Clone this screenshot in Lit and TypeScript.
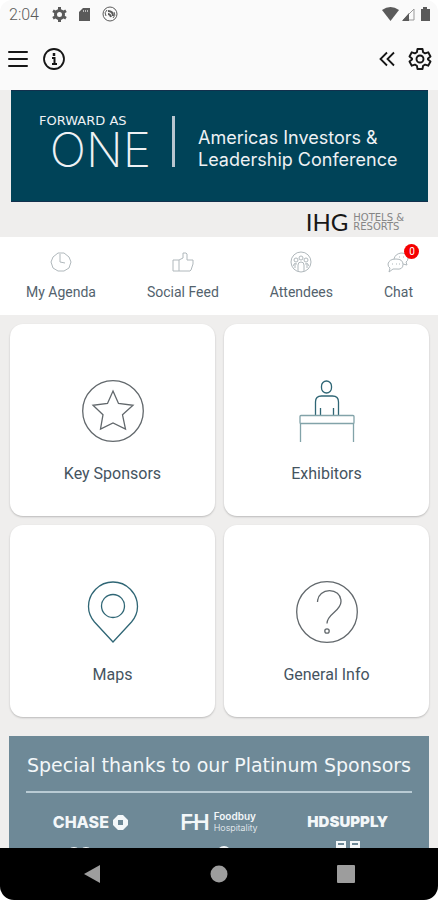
import { LitElement, html, css, svg } from "lit";
import { customElement } from "lit/decorators.js";

const shortcuts = [
  {
    label: "My Agenda",
    badge: "",
    icon: svg`<path d="M8 2h6l5 4 2 5-2 6-5 3H8l-5-3-2-6 2-5z"/><path d="M10 3v8l5 1"/>`,
  },
  {
    label: "Social Feed",
    badge: "",
    icon: svg`<path d="M1 9h6v11H1zM7 9l4-2V2h3l1 1v6h6v4l-2 6-1 1H7"/>`,
  },
  {
    label: "Attendees",
    badge: "",
    icon: svg`<circle cx="11" cy="11" r="10"/><circle cx="11" cy="7" r="2"/><circle cx="6" cy="9" r="2"/><circle cx="16" cy="9" r="2"/><path d="M8 20v-6q0-3 3-3t3 3v6M3 15q1-4 4-2M19 15q-1-4-4-2M5 13v4M17 13v4"/>`,
  },
  {
    label: "Chat",
    badge: "0",
    icon: svg`<path d="M7 8q1-5 7-6 7 0 7 5 0 3-2 4l1 3-4-1"/><path d="M9 8q7 0 7 5.500T9 18H6l-4 3 1-4q-2-1-2-4 1-5 8-5z"/><path d="M5 13h1M9 13h1M12 13h1M12 6h1M16 6h1"/>`,
  },
];

const tiles = [
  {
    label: "Key Sponsors",
    tone: "gray",
    icon: svg`<circle cx="31" cy="31" r="30.300"/><path d="M31 11l5.500 12.500 14.500 1.800-10.500 9.500L43.500 49 31 43l-12.500 6 2.500-14.300-10-9.400 14.500-1.800z"/>`,
  },
  {
    label: "Exhibitors",
    tone: "teal",
    icon: svg`<rect x="25.500" y="1" width="10" height="12" rx="5"/><path d="M19.500 35V22q0-6 6-6h11q6 0 6 6v13M24.500 35v-7M37.500 35v-7"/><g class="soft"><rect x="4" y="35.500" width="54" height="8" rx="1"/><path d="M4.500 43v19M57.500 43v19"/></g>`,
  },
  {
    label: "Maps",
    tone: "teal",
    icon: svg`<circle cx="31" cy="25" r="11.500"/><path d="M31 61L12.500 41Q6.500 34 6.500 25.500a24.500 24.500 0 0 1 49 0Q55.500 34 49.500 41z"/>`,
  },
  {
    label: "General Info",
    tone: "gray",
    icon: svg`<circle cx="31" cy="31" r="30.300"/><path d="M21.500 21C22 6 45 6 45 20.500c0 10-14 12-14 22"/><circle cx="31" cy="50" r="2.200"/>`,
  },
];

@customElement("app-root")
export class AppRoot extends LitElement {
  static styles = css`
    :host {
      display: flex;
      flex-direction: column;
      height: 100vh;
      background: #fff;
      font-family: Roboto, "Liberation Sans", sans-serif;
      color: #45545f;
    }
    * { box-sizing: border-box; }
    svg { display: block; fill: none; stroke: currentColor; }
    button { border: 0; padding: 0; margin: 0; background: none; font: inherit; color: inherit; }
    a { color: inherit; text-decoration: none; }
    .solid { fill: currentColor; stroke: none; }
    .status {
      display: flex;
      align-items: center;
      height: 28px;
      padding: 0 5px 0 9px;
      background: #fafafa;
      border-radius: 12px 12px 0 0;
      color: #5a5a5a;
      font-size: 16px;
      font-weight: 300;
      flex: none;
    }
    .status .left, .status .right { display: flex; align-items: center; }
    .status .left { flex: 1; gap: 10px; }
    .status .left span { margin-right: 3px; }
    .status .right { gap: 2px; }
    .bar {
      display: flex;
      align-items: center;
      justify-content: space-between;
      height: 62px;
      padding: 0 6px;
      background: #fafafa;
      color: #161616;
      flex: none;
    }
    .bar div { display: flex; gap: 12px; }
    .bar .right { gap: 8px; }
    .scroll {
      flex: 1;
      min-height: 0;
      overflow-y: auto;
      scrollbar-width: none;
      background: #efeeed;
    }
    .banner {
      display: flex;
      align-items: flex-start;
      margin: 0 10px 0 11px;
      height: 112px;
      padding: 25px 26px 0 28px;
      background: #004358;
      border-top: 1px solid #12304d;
      border-bottom: 1px solid #12304d;
      color: #eef1f4;
    }
    .brand { width: 112px; margin-right: 21px; flex: none; }
    .forward { font: 400 13px/10px "DejaVu Sans", sans-serif; white-space: nowrap; }
    .one { font: 200 48px/36px Inter, sans-serif; text-align: right; margin-top: 6px; }
    .rule { width: 3px; height: 51px; background: #b8c6d0; margin-right: 23px; flex: none; }
    .conf { margin: 0; padding-top: 11px; font: 400 18px/22px Inter, sans-serif; white-space: nowrap; }
    .host-brand {
      display: flex;
      align-items: center;
      justify-content: flex-end;
      gap: 5px;
      height: 35px;
      padding: 4px 34px 0 0;
    }
    .ihg { font: 400 24px/24px Lato, sans-serif; color: #171717; }
    .ihg-sub { font: 400 10px/9px "DejaVu Sans", sans-serif; color: #858585; }
    .tabs {
      display: flex;
      justify-content: space-between;
      padding: 14px 25px 14px 26px;
      background: #fff;
      color: #53626d;
    }
    .tabs a { display: flex; flex-direction: column; align-items: center; gap: 9px; }
    .tabs .label { font: 400 14px/20px Roboto, sans-serif; }
    .tabs .glyph { position: relative; color: #b0b8bc; }
    .badge {
      position: absolute;
      top: -7px;
      right: -10px;
      width: 15px;
      height: 15px;
      border-radius: 50%;
      background: #f50000;
      color: #fff;
      font: 400 10px/15px Roboto, sans-serif;
      text-align: center;
    }
    .tabs { height: 78px; }
    .tiles {
      display: grid;
      grid-template-columns: 1fr 1fr;
      gap: 9px;
      padding: 9px 9px 9px 10px;
    }
    .tile {
      display: flex;
      flex-direction: column;
      align-items: center;
      gap: 20px;
      padding: 56px 8px 30px;
      border-radius: 13px;
      background: #fff;
      box-shadow: 0 1px 2px rgba(0, 0, 0, 0.22);
      font: 400 16px/24px Roboto, sans-serif;
    }
    .gray { color: #62686c; }
    .teal { color: #2f6675; }
    .soft { color: #82a3a9; stroke: #82a3a9; }
    .thanks {
      margin: 10px 9px 0;
      padding: 16px 17px 20px;
      background: #6e8997;
      color: #f3f7f9;
    }
    .thanks h2 {
      margin: 0;
      padding-bottom: 13px;
      border-bottom: 2px solid #b9cbd4;
      font: 400 19px/26px "DejaVu Sans", sans-serif;
      text-align: center;
      white-space: nowrap;
    }
    .logos { display: grid; grid-template-columns: 1fr 1fr 1fr; row-gap: 6px; padding-top: 16px; justify-items: center; }
    .logo { display: flex; align-items: center; gap: 4px; height: 26px; }
    .chase { font: 800 16px/20px Inter, sans-serif; }
    .fh { position: relative; font: 600 22px/24px Inter, sans-serif; }
    .fh::after { content: ""; position: absolute; left: 4px; right: 4px; top: 11px; height: 2px; background: currentColor; }
    .foodbuy { font: 600 10px/12px Inter, sans-serif; }
    .foodbuy small { display: block; font-size: 9px; font-weight: 300; line-height: 12px; }
    .hd { font: 900 15px/20px Inter, sans-serif; }
    .nav {
      display: flex;
      justify-content: space-around;
      align-items: center;
      height: 52px;
      padding: 0 29px;
      background: #000;
      border-radius: 0 0 14px 14px;
      color: #9d9d9d;
      flex: none;
    }
  `;

  render() {
    return html`
      <div class="status">
        <div class="left">
          <span>2:04</span>
          <svg width="15" height="15" viewBox="0 0 15 15" stroke-width="3"><circle cx="7.500" cy="7.500" r="4"/><path d="M7.500 0v3M7.500 12v3M1 3.800l2.500 1.400M11.500 9.800L14 11.200M1 11.200l2.500-1.400M11.500 5.200L14 3.800"/></svg>
          <svg width="15" height="15" viewBox="0 0 15 15"><path class="solid" d="M6 1h7v13H2V5z"/><path stroke="#bbb" d="M6.500 3v2M8.500 3v2M10.500 3v2"/></svg>
          <svg width="16" height="16" viewBox="0 0 16 16"><circle cx="8" cy="8" r="7"/><path d="M4 10a4.500 4.500 0 0 1 1-6M12 6a4.500 4.500 0 0 1-1 6"/><path stroke-width="2" d="M6 5q5 0 5 5M6 8q2 0 3 3"/></svg>
        </div>
        <div class="right">
          <svg class="solid" width="17" height="14" viewBox="0 0 17 14"><path d="M0 3q8.500-6 17 0L8.500 14z"/></svg>
          <svg width="15" height="15" viewBox="0 0 15 15"><path stroke="#999" d="M13 2v11H2z"/><path class="solid" d="M1 14L8 6v8z"/></svg>
          <svg class="solid" width="15" height="15" viewBox="0 0 15 15"><path d="M5 0h4v2h3v12H3V2h2z"/></svg>
        </div>
      </div>
      <header class="bar">
        <div>
          <button aria-label="Menu"><svg width="24" height="24" viewBox="0 0 24 24" stroke-width="2" stroke-linecap="round"><path d="M3 5h18M3 12h18M3 19h18"/></svg></button>
          <button aria-label="Information"><svg width="24" height="24" viewBox="0 0 24 24" stroke-width="1.800"><circle cx="12" cy="12" r="10"/><path stroke-width="2.500" d="M12 6v3"/><path stroke-width="2" d="M10 11h2.500v6M10 17h5"/></svg></button>
        </div>
        <div class="right">
          <button aria-label="Collapse"><svg width="24" height="24" viewBox="0 0 24 24" stroke-width="1.800"><path d="M11 5.500L4.500 12l6.500 6.500M18 5.500L11.500 12l6.500 6.500"/></svg></button>
          <button aria-label="Settings"><svg width="24" height="24" viewBox="0 0 24 24" stroke-width="1.900" stroke-linejoin="round"><circle cx="12" cy="12" r="3.500"/><path d="M9.500 2h5l.6 3.200 2 1.200L20.200 5.300l2.300 4.200L20 11.500v1l2.500 2-2.300 4.200-3.100-1.100-2 1.200-.6 3.200h-5l-.6-3.200-2-1.200-3.100 1.100-2.300-4.200 2.500-2v-1l-2.500-2 2.300-4.200 3.100 1.100 2-1.200z"/></svg></button>
        </div>
      </header>
      <main class="scroll">
        <section class="banner">
          <div class="brand"><div class="forward">FORWARD AS</div><div class="one">ONE</div></div>
          <div class="rule"></div>
          <h1 class="conf">Americas Investors &amp;<br />Leadership Conference</h1>
        </section>
        <div class="host-brand">
          <div class="ihg">IHG</div>
          <div class="ihg-sub">HOTELS &amp;<br />RESORTS</div>
        </div>
        <nav class="tabs">
          ${shortcuts.map(
            (s) => html`<a href="#">
              <span class="glyph"><svg width="22" height="22" viewBox="0 0 22 22">${s.icon}</svg>${s.badge ? html`<span class="badge">${s.badge}</span>` : ""}</span>
              <span class="label">${s.label}</span>
            </a>`
          )}
        </nav>
        <section class="tiles">
          ${tiles.map(
            (t) => html`<button class="tile">
              <svg class=${t.tone} width="62" height="62" viewBox="0 0 62 62" stroke-width="1.300">${t.icon}</svg>
              <span>${t.label}</span>
            </button>`
          )}
        </section>
        <section class="thanks">
          <h2>Special thanks to our Platinum Sponsors</h2>
          <div class="logos">
            <div class="logo"><span class="chase">CHASE</span><svg class="solid" width="15" height="15" viewBox="0 0 15 15"><path fill-rule="evenodd" d="M5 0h5l5 5v5l-5 5H5l-5-5V5zM5 5v5h5V5z"/></svg></div>
            <div class="logo"><span class="fh">FH</span><span class="foodbuy">Foodbuy<small>Hospitality</small></span></div>
            <div class="logo"><span class="hd">HDSUPPLY</span></div>
            <svg width="50" height="26" viewBox="0 0 50 26" stroke-width="2"><circle cx="9" cy="13" r="6"/><circle cx="21" cy="13" r="6"/></svg>
            <svg class="solid" width="20" height="26" viewBox="0 0 20 26"><circle cx="15" cy="12" r="7"/></svg>
            <svg width="28" height="26" viewBox="0 0 28 26" stroke-width="2"><path d="M3 1h8v4H3zM2 7h10M5 5v5M9 5v5M17 1h8v4h-8zM16 7h10M19 5v5M23 5v5"/></svg>
          </div>
        </section>
      </main>
      <nav class="nav">
        <button aria-label="Back"><svg class="solid" width="18" height="18" viewBox="0 0 18 18"><path d="M17 0v18L1 9z"/></svg></button>
        <button aria-label="Home"><svg class="solid" width="18" height="18" viewBox="0 0 18 18"><circle cx="9" cy="9" r="8.500"/></svg></button>
        <button aria-label="Recent apps"><svg class="solid" width="18" height="18" viewBox="0 0 18 18"><rect width="18" height="18" rx="1"/></svg></button>
      </nav>
    `;
  }
}
